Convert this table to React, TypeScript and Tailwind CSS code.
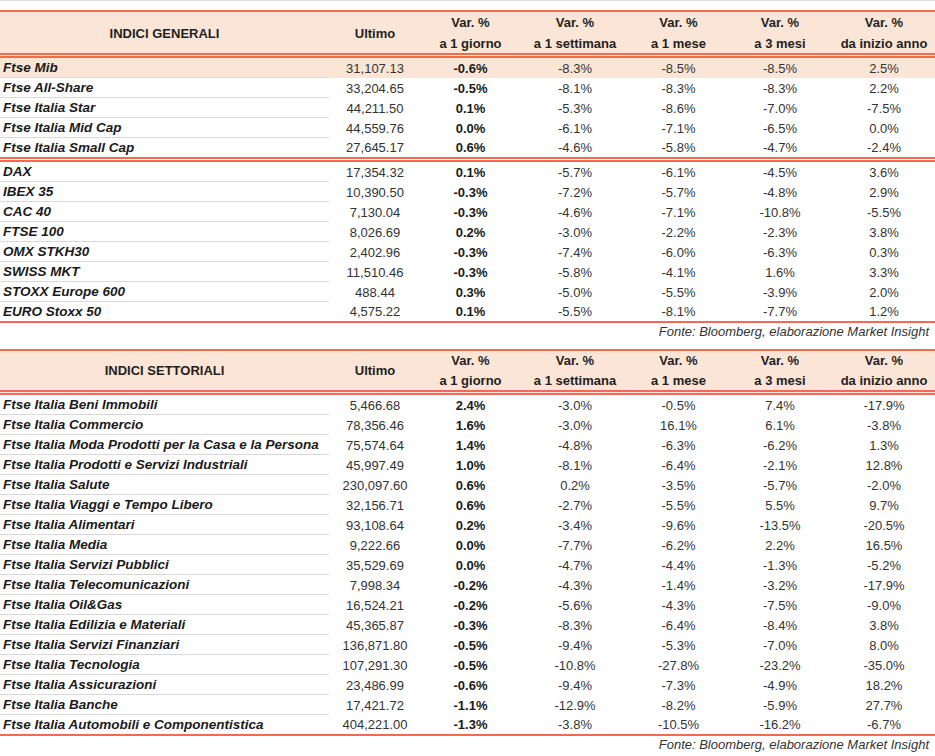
const cols = "grid grid-cols-[329px_92px_99px_110px_97px_106px_102px]";

type Row = { name: string; last: string; d: string; w: string; m: string; q: string; y: string; hl?: boolean };

const generali: Row[][] = [
  [
    { name: "Ftse Mib", last: "31,107.13", d: "-0.6%", w: "-8.3%", m: "-8.5%", q: "-8.5%", y: "2.5%", hl: true },
    { name: "Ftse All-Share", last: "33,204.65", d: "-0.5%", w: "-8.1%", m: "-8.3%", q: "-8.3%", y: "2.2%" },
    { name: "Ftse Italia Star", last: "44,211.50", d: "0.1%", w: "-5.3%", m: "-8.6%", q: "-7.0%", y: "-7.5%" },
    { name: "Ftse Italia Mid Cap", last: "44,559.76", d: "0.0%", w: "-6.1%", m: "-7.1%", q: "-6.5%", y: "0.0%" },
    { name: "Ftse Italia Small Cap", last: "27,645.17", d: "0.6%", w: "-4.6%", m: "-5.8%", q: "-4.7%", y: "-2.4%" },
  ],
  [
    { name: "DAX", last: "17,354.32", d: "0.1%", w: "-5.7%", m: "-6.1%", q: "-4.5%", y: "3.6%" },
    { name: "IBEX 35", last: "10,390.50", d: "-0.3%", w: "-7.2%", m: "-5.7%", q: "-4.8%", y: "2.9%" },
    { name: "CAC 40", last: "7,130.04", d: "-0.3%", w: "-4.6%", m: "-7.1%", q: "-10.8%", y: "-5.5%" },
    { name: "FTSE 100", last: "8,026.69", d: "0.2%", w: "-3.0%", m: "-2.2%", q: "-2.3%", y: "3.8%" },
    { name: "OMX STKH30", last: "2,402.96", d: "-0.3%", w: "-7.4%", m: "-6.0%", q: "-6.3%", y: "0.3%" },
    { name: "SWISS MKT", last: "11,510.46", d: "-0.3%", w: "-5.8%", m: "-4.1%", q: "1.6%", y: "3.3%" },
    { name: "STOXX Europe 600", last: "488.44", d: "0.3%", w: "-5.0%", m: "-5.5%", q: "-3.9%", y: "2.0%" },
    { name: "EURO Stoxx 50", last: "4,575.22", d: "0.1%", w: "-5.5%", m: "-8.1%", q: "-7.7%", y: "1.2%" },
  ],
];

const settoriali: Row[][] = [
  [
    { name: "Ftse Italia Beni Immobili", last: "5,466.68", d: "2.4%", w: "-3.0%", m: "-0.5%", q: "7.4%", y: "-17.9%" },
    { name: "Ftse Italia Commercio", last: "78,356.46", d: "1.6%", w: "-3.0%", m: "16.1%", q: "6.1%", y: "-3.8%" },
    { name: "Ftse Italia Moda Prodotti per la Casa e la Persona", last: "75,574.64", d: "1.4%", w: "-4.8%", m: "-6.3%", q: "-6.2%", y: "1.3%" },
    { name: "Ftse Italia Prodotti e Servizi Industriali", last: "45,997.49", d: "1.0%", w: "-8.1%", m: "-6.4%", q: "-2.1%", y: "12.8%" },
    { name: "Ftse Italia Salute", last: "230,097.60", d: "0.6%", w: "0.2%", m: "-3.5%", q: "-5.7%", y: "-2.0%" },
    { name: "Ftse Italia Viaggi e Tempo Libero", last: "32,156.71", d: "0.6%", w: "-2.7%", m: "-5.5%", q: "5.5%", y: "9.7%" },
    { name: "Ftse Italia Alimentari", last: "93,108.64", d: "0.2%", w: "-3.4%", m: "-9.6%", q: "-13.5%", y: "-20.5%" },
    { name: "Ftse Italia Media", last: "9,222.66", d: "0.0%", w: "-7.7%", m: "-6.2%", q: "2.2%", y: "16.5%" },
    { name: "Ftse Italia Servizi Pubblici", last: "35,529.69", d: "0.0%", w: "-4.7%", m: "-4.4%", q: "-1.3%", y: "-5.2%" },
    { name: "Ftse Italia Telecomunicazioni", last: "7,998.34", d: "-0.2%", w: "-4.3%", m: "-1.4%", q: "-3.2%", y: "-17.9%" },
    { name: "Ftse Italia Oil&Gas", last: "16,524.21", d: "-0.2%", w: "-5.6%", m: "-4.3%", q: "-7.5%", y: "-9.0%" },
    { name: "Ftse Italia Edilizia e Materiali", last: "45,365.87", d: "-0.3%", w: "-8.3%", m: "-6.4%", q: "-8.4%", y: "3.8%" },
    { name: "Ftse Italia Servizi Finanziari", last: "136,871.80", d: "-0.5%", w: "-9.4%", m: "-5.3%", q: "-7.0%", y: "8.0%" },
    { name: "Ftse Italia Tecnologia", last: "107,291.30", d: "-0.5%", w: "-10.8%", m: "-27.8%", q: "-23.2%", y: "-35.0%" },
    { name: "Ftse Italia Assicurazioni", last: "23,486.99", d: "-0.6%", w: "-9.4%", m: "-7.3%", q: "-4.9%", y: "18.2%" },
    { name: "Ftse Italia Banche", last: "17,421.72", d: "-1.1%", w: "-12.9%", m: "-8.2%", q: "-5.9%", y: "27.7%" },
    { name: "Ftse Italia Automobili e Componentistica", last: "404,221.00", d: "-1.3%", w: "-3.8%", m: "-10.5%", q: "-16.2%", y: "-6.7%" },
  ],
];

const periods = ["a 1 giorno", "a 1 settimana", "a 1 mese", "a 3 mesi", "da inizio anno"];

function Header({ title, tall }: { title: string; tall?: boolean }) {
  return (
    <div
      className={`${cols} bg-[#fbe5d6] border-b-[5px] border-double border-[#f26b50] text-[13px] font-bold text-[#1f1f1f] ${
        tall ? "h-[46px] leading-[21px]" : "h-[44px] leading-5"
      }`}
    >
      <div className="flex items-center justify-center">{title}</div>
      <div className="flex items-center justify-center">Ultimo</div>
      {periods.map((p) => (
        <div key={p} className="flex flex-col items-center justify-center">
          <span>Var. %</span>
          <span>{p}</span>
        </div>
      ))}
    </div>
  );
}

function DataRow({ row, isLast }: { row: Row; isLast: boolean }) {
  return (
    <div className={`${cols} ${isLast ? "h-[19px]" : "h-5"} ${row.hl ? "bg-[#fbe5d6]" : ""} text-[13px] leading-none`}>
      <div
        className={`flex items-center pl-[3px] text-[13.5px] font-bold italic text-[#1a1a1a] ${
          isLast ? "" : "border-b border-[#d9d9d9]"
        }`}
      >
        {row.name}
      </div>
      <div className="flex items-center justify-center text-[#333]">{row.last}</div>
      <div className="flex items-center justify-center font-bold text-[#1a1a1a]">{row.d}</div>
      <div className="flex items-center justify-center text-[#333]">{row.w}</div>
      <div className="flex items-center justify-center text-[#333]">{row.m}</div>
      <div className="flex items-center justify-center text-[#333]">{row.q}</div>
      <div className="flex items-center justify-center text-[#333]">{row.y}</div>
    </div>
  );
}

function Table({ title, groups, tall }: { title: string; groups: Row[][]; tall?: boolean }) {
  return (
    <div>
      <div className="border-t-2 border-[#f26b50]">
        <Header title={title} tall={tall} />
        {groups.map((g, gi) => (
          <div key={gi} className={gi > 0 ? "border-t-[5px] border-double border-[#f26b50]" : ""}>
            {g.map((r, i) => (
              <DataRow key={r.name} row={r} isLast={i === g.length - 1} />
            ))}
          </div>
        ))}
      </div>
      <div className="border-t-2 border-[#f26b50] h-[20px] pr-[6px] text-right text-[13px] leading-[18px] italic text-[#333]">
        Fonte: Bloomberg, elaborazione Market Insight
      </div>
    </div>
  );
}

export default function App() {
  return (
    <div className="w-[935px] h-[756px] bg-white font-['Liberation_Sans',Arial,sans-serif] border-t border-[#dcdcdc] pt-[9px] overflow-hidden">
      <Table title="INDICI GENERALI" groups={generali} tall />
      <div className="mt-[8px]">
        <Table title="INDICI SETTORIALI" groups={settoriali} />
      </div>
    </div>
  );
}
